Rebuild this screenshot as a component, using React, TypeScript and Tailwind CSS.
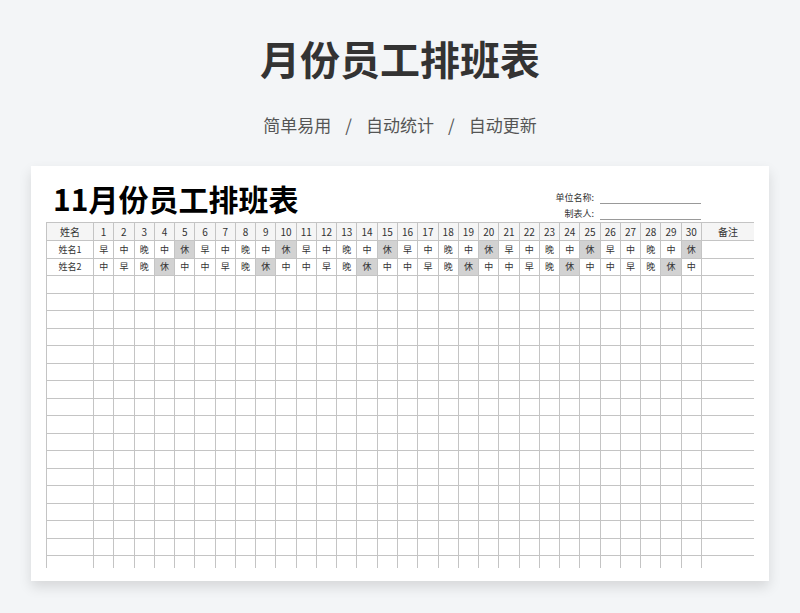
import React from "react";

const days = Array.from({ length: 30 }, (_, i) => i + 1);
const p1 = ["早", "中", "晚", "中", "休"];
const p2 = ["中", "早", "晚", "休", "中"];
const rows = [
  { name: "姓名1", s: days.map((d) => p1[(d - 1) % 5]) },
  { name: "姓名2", s: days.map((d) => p2[(d - 1) % 5]) },
];
const empty = Array.from({ length: 18 }, (_, i) => i);
const font = { fontFamily: '"Noto Sans CJK SC", "Noto Sans", sans-serif' };
const cell = "border border-[#c4c4c4] text-center p-0";

export default function App() {
  return (
    <div className="w-[800px] h-[613px] bg-[#f3f5f7] flex flex-col items-center overflow-hidden" style={font}>
      <h1 className="mt-[33px] text-[40px] leading-[50px] font-bold text-[#333]">月份员工排班表</h1>
      <div className="mt-[30px] text-[17px] leading-[24px] text-[#555] flex gap-[14px]">
        <span>简单易用</span><span>/</span><span>自动统计</span><span>/</span><span>自动更新</span>
      </div>
      <div className="mt-[29px] w-[738px] h-[415px] bg-white shadow-[0_6px_12px_rgba(0,0,0,0.12)] px-[15px] pt-[10px] flex flex-col">
        <div className="flex items-end justify-between h-[46px]">
          <div className="text-[30px] leading-[36px] font-bold text-black pl-[7px] mb-[6px]">11月份员工排班表</div>
          <div className="flex flex-col gap-[2px] text-[9px] text-[#333] mr-[53px] mb-[2px]">
            <div className="flex items-end"><span className="w-[48px] text-right">单位名称:</span><span className="ml-[6px] w-[101px] border-b border-[#999] h-[14px]"></span></div>
            <div className="flex items-end"><span className="w-[48px] text-right">制表人:</span><span className="ml-[6px] w-[101px] border-b border-[#999] h-[14px]"></span></div>
          </div>
        </div>
        <div className="h-[346px] overflow-hidden">
          <table className="border-collapse table-fixed w-[708px] text-[9px] text-[#333]">
            <colgroup>
              <col className="w-[47px]" />
              {days.map((d) => <col key={d} className="w-[20.27px]" />)}
              <col className="w-[53px]" />
            </colgroup>
            <tbody>
              <tr className="h-[18px] bg-[#f5f5f5] text-[10px]">
                <td className={cell}>姓名</td>
                {days.map((d) => <td key={d} className={cell}>{d}</td>)}
                <td className={cell}>备注</td>
              </tr>
              {rows.map((r) => (
                <tr key={r.name} className="h-[17.5px]">
                  <td className={cell}>{r.name}</td>
                  {r.s.map((v, i) => (
                    <td key={i} className={`${cell} ${v === "休" ? "bg-[#d2d2d2]" : ""}`}>{v}</td>
                  ))}
                  <td className={cell}></td>
                </tr>
              ))}
              {empty.map((e) => (
                <tr key={e} className="h-[17.5px]">
                  <td className={cell}></td>
                  {days.map((d) => <td key={d} className={cell}></td>)}
                  <td className={cell}></td>
                </tr>
              ))}
            </tbody>
          </table>
        </div>
      </div>
    </div>
  );
}
